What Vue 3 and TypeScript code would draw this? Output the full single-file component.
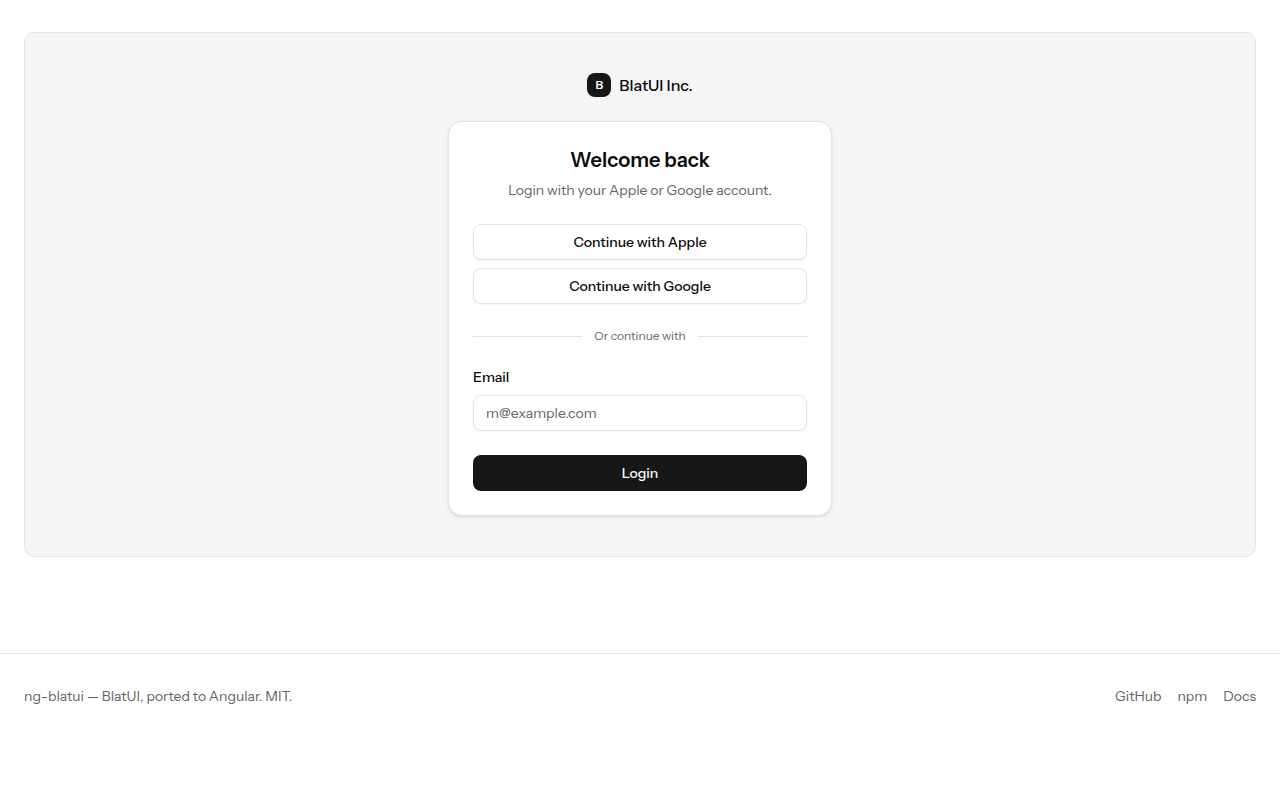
<script setup lang="ts">
import { ref } from 'vue'

const email = ref('')
const providers: string[] = ['Apple', 'Google']
const links: string[] = ['GitHub', 'npm', 'Docs']
</script>

<template>
  <div class="page">
    <main class="content">
      <section class="preview">
        <div class="stack">
          <a class="brand" href="#">
            <span class="mark">B</span>
            <span>BlatUI Inc.</span>
          </a>
          <div class="card">
            <header class="head">
              <h1>Welcome back</h1>
              <p>Login with your Apple or Google account.</p>
            </header>
            <form class="form" @submit.prevent>
              <div class="providers">
                <button v-for="p in providers" :key="p" type="button" class="btn outline">Continue with {{ p }}</button>
              </div>
              <div class="divider"><span>Or continue with</span></div>
              <div class="field">
                <label for="email">Email</label>
                <input id="email" v-model="email" type="email" placeholder="m@example.com" />
              </div>
              <button type="submit" class="btn primary">Login</button>
            </form>
          </div>
        </div>
      </section>
    </main>
    <footer class="footer">
      <p>ng-blatui — BlatUI, ported to Angular. MIT.</p>
      <nav>
        <a v-for="l in links" :key="l" href="#">{{ l }}</a>
      </nav>
    </footer>
  </div>
</template>

<style>
html,
body {
  margin: 0;
  background: #fff;
}
</style>

<style scoped>
.page,
.page * {
  box-sizing: border-box;
}
.page {
  font-family: 'Instrument Sans', Inter, 'Liberation Sans', sans-serif;
  font-size: 14px;
  line-height: 20px;
  color: #0a0a0a;
}
h1,
p {
  margin: 0;
}
a {
  color: inherit;
  text-decoration: none;
}
.content {
  padding: 32px 24px 96px;
}
.preview {
  display: flex;
  justify-content: center;
  padding: 40px;
  background: #f5f5f5;
  border: 1px solid #e5e5e5;
  border-radius: 10px;
}
.stack {
  display: flex;
  flex-direction: column;
  gap: 24px;
  width: 100%;
  max-width: 384px;
}
.brand {
  display: flex;
  align-items: center;
  align-self: center;
  gap: 8px;
  font-size: 16px;
  line-height: 24px;
  font-weight: 500;
}
.mark {
  display: flex;
  align-items: center;
  justify-content: center;
  width: 24px;
  height: 24px;
  border-radius: 8px;
  background: #171717;
  color: #fafafa;
  font-size: 12px;
  line-height: 16px;
  font-weight: 600;
}
.card {
  display: flex;
  flex-direction: column;
  gap: 24px;
  padding: 24px;
  background: #fff;
  border: 1px solid #e5e5e5;
  border-radius: 14px;
  box-shadow: 0 1px 3px rgba(0, 0, 0, 0.1), 0 1px 2px -1px rgba(0, 0, 0, 0.1);
}
.head {
  display: flex;
  flex-direction: column;
  gap: 6px;
  text-align: center;
}
h1 {
  font-size: 20px;
  line-height: 28px;
  font-weight: 600;
}
.head p {
  color: #636363;
}
.form {
  display: flex;
  flex-direction: column;
  gap: 24px;
}
.providers,
.field {
  display: flex;
  flex-direction: column;
  gap: 8px;
}
.btn {
  height: 36px;
  padding: 0 16px;
  border: 0;
  border-radius: 8px;
  font: inherit;
  font-weight: 500;
  cursor: pointer;
}
.outline {
  border: 1px solid #e5e5e5;
  background: #fff;
  color: #0a0a0a;
  box-shadow: 0 1px 2px rgba(0, 0, 0, 0.05);
}
.primary {
  background: #171717;
  color: #fafafa;
}
.divider {
  display: flex;
  align-items: center;
  gap: 12px;
  font-size: 12px;
  line-height: 16px;
  color: #636363;
}
.divider::before,
.divider::after {
  content: '';
  flex: 1;
  height: 1px;
  background: #e5e5e5;
}
.field label {
  line-height: 19px;
  font-weight: 500;
}
.field input {
  width: 100%;
  height: 36px;
  padding: 0 12px;
  border: 1px solid #e5e5e5;
  border-radius: 8px;
  background: #fff;
  color: #0a0a0a;
  font: inherit;
  box-shadow: 0 1px 2px rgba(0, 0, 0, 0.05);
}
.field input::placeholder {
  color: #636363;
  opacity: 1;
}
.footer {
  display: flex;
  align-items: center;
  justify-content: space-between;
  padding: 32px 24px;
  border-top: 1px solid #e5e5e5;
  color: #636363;
}
.footer nav {
  display: flex;
  gap: 16px;
}
</style>
